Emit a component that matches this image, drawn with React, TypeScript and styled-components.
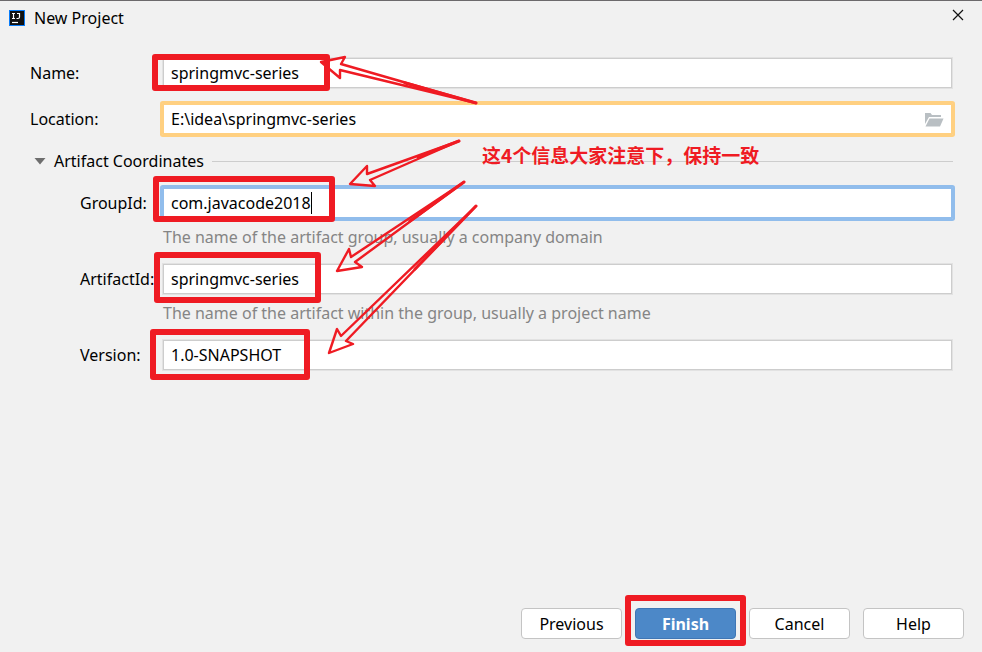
import React from "react";
import styled, { createGlobalStyle, css } from "styled-components";

const RED = "#ef1b23";

const GlobalStyle = createGlobalStyle`
  * { box-sizing: border-box; }
  body {
    margin: 0;
    background: #f1f1f1;
    color: #000;
    font-family: "Noto Sans", "Open Sans", "Noto Sans CJK SC", sans-serif;
    font-size: 16px;
    line-height: 22px;
  }
  button, input { font: inherit; color: inherit; }
`;

const Dialog = styled.main`
  position: relative;
  display: flex;
  flex-direction: column;
  min-height: 100vh;
  border-top: 1px solid #6c6a6c;
  background: #f1f1f1;
`;

const TitleBar = styled.header`
  display: flex;
  align-items: center;
  gap: 9px;
  height: 33px;
  padding: 0 16px 0 9px;
`;

const Title = styled.h1`
  flex: 1;
  margin: 0;
  font-size: 16px;
  font-weight: 400;
`;

const CloseButton = styled.button`
  display: flex;
  align-items: center;
  justify-content: center;
  width: 16px;
  height: 16px;
  margin-bottom: 6px;
  padding: 0;
  border: 0;
  background: none;
`;

const Form = styled.form`
  flex: 1;
  display: flex;
  flex-direction: column;
  padding: 16px 29px 13px 30px;
`;

const Row = styled.div`
  display: flex;
  align-items: center;
  height: 46px;
`;

const Label = styled.label<{ $nested?: boolean }>`
  flex: none;
  width: ${(p) => (p.$nested ? 82 : 132)}px;
  white-space: nowrap;
`;

const Field = styled.div`
  position: relative;
  flex: 1;
  display: flex;
`;

type Ring = "none" | "warning" | "focus";

const ring = (color: string) => css`
  border-color: ${color};
  border-radius: 1px;
  box-shadow: 0 0 0 2px ${color}, inset 0 0 0 1px ${color};
`;

const TextInput = styled.input<{ $ring: Ring }>`
  flex: 1;
  min-width: 0;
  height: 32px;
  padding: 0 8px;
  border: 1px solid #e2e2e2;
  outline: none;
  background: #fff;
  box-shadow: inset 0 0 0 1px #cdcdcd;
  ${(p) => p.$ring === "warning" && ring("#ffd081")}
  ${(p) => p.$ring === "focus" && ring("#91bdec")}
`;

const BrowseButton = styled.button`
  position: absolute;
  top: 8px;
  right: 9px;
  width: 20px;
  height: 16px;
  padding: 0;
  border: 0;
  background: none;
`;

const Caret = styled.span`
  position: absolute;
  top: 5px;
  left: 149px;
  width: 1px;
  height: 22px;
  background: #000;
`;

const SectionToggle = styled.button`
  display: flex;
  align-items: center;
  gap: 8px;
  height: 38px;
  padding: 0 0 0 4px;
  border: 0;
  background: none;
  text-align: left;
`;

const Divider = styled.span`
  flex: 1;
  height: 1px;
  background: #cdcdcd;
`;

const Section = styled.div`
  display: flex;
  flex-direction: column;
  gap: 8px;
  padding-left: 50px;
`;

const Hint = styled.p`
  margin: 0 0 0 83px;
  color: #858585;
`;

const Actions = styled.footer`
  display: flex;
  justify-content: flex-end;
  gap: 13px;
  margin-top: auto;
  margin-right: -11px;
`;

const ActionSlot = styled.div`
  position: relative;
  display: flex;
`;

const ActionButton = styled.button<{ $primary?: boolean }>`
  width: 101px;
  height: 31px;
  padding: 0;
  border: 1px solid ${(p) => (p.$primary ? "#3f76b5" : "#c4c4c4")};
  border-radius: 4px;
  background: ${(p) => (p.$primary ? "#4c88c8" : "#fff")};
  color: ${(p) => (p.$primary ? "#fff" : "#000")};
  font-weight: ${(p) => (p.$primary ? 700 : 400)};
  line-height: 28px;
`;

const Marker = styled.span<{ $left: number; $top: number; $width: number; $height: number }>`
  position: absolute;
  left: ${(p) => p.$left}px;
  top: ${(p) => p.$top}px;
  width: ${(p) => p.$width}px;
  height: ${(p) => p.$height}px;
  border: 6px solid ${RED};
  border-radius: 3px;
  pointer-events: none;
`;

const Arrows = styled.svg`
  position: absolute;
  top: -1px;
  left: 0;
  pointer-events: none;
`;

const Note = styled.p`
  position: absolute;
  top: 140px;
  left: 482px;
  margin: 0;
  color: ${RED};
  font-family: "Noto Sans CJK SC", sans-serif;
  font-size: 19px;
  font-weight: 700;
  line-height: 28px;
  white-space: nowrap;
`;

const AppIcon = () => (
  <svg width="16" height="16" viewBox="0 0 16 16" aria-hidden="true">
    <rect width="16" height="16" fill="#087cfa" />
    <rect x="1" y="1" width="14" height="14" fill="#111" />
    <path d="M3 3.500H6M4.500 3.500V8.500M3 8.500H6M8 3.500H10.500V7Q10.500 8.500 9 8.500H7.500" stroke="#fff" strokeWidth="1.200" fill="none" />
    <path d="M3 12.500H9" stroke="#fff" strokeWidth="1.200" />
  </svg>
);

const FolderIcon = () => (
  <svg width="20" height="16" viewBox="0 0 20 16" aria-hidden="true">
    <path d="M1 12V1H6.500L8 3H17V5H5Z" fill="#b9bfc3" />
    <path d="M5.500 6.500H19.500L16 14.500H1.500Z" fill="#b9bfc3" />
  </svg>
);

interface FieldRowProps {
  id: string;
  label: string;
  value: string;
  nested?: boolean;
  state?: Ring;
  children?: React.ReactNode;
}

function FieldRow({ id, label, value, nested, state = "none", children }: FieldRowProps) {
  return (
    <Row>
      <Label htmlFor={id} $nested={nested}>{label}</Label>
      <Field>
        <TextInput id={id} type="text" defaultValue={value} $ring={state} spellCheck={false} />
        {children}
      </Field>
    </Row>
  );
}

export default function App() {
  return (
    <>
      <GlobalStyle />
      <Dialog>
        <TitleBar>
          <AppIcon />
          <Title>New Project</Title>
          <CloseButton type="button" aria-label="Close">
            <svg width="12" height="12" viewBox="0 0 12 12">
              <path d="M1 1L11 11M11 1L1 11" stroke="#111" strokeWidth="1.200" />
            </svg>
          </CloseButton>
        </TitleBar>
        <Form onSubmit={(e) => e.preventDefault()}>
          <FieldRow id="name" label="Name:" value="springmvc-series">
            <Marker $left={-10} $top={-3} $width={178} $height={37} />
          </FieldRow>
          <FieldRow id="location" label="Location:" value="E:\idea\springmvc-series" state="warning">
            <BrowseButton type="button" aria-label="Browse"><FolderIcon /></BrowseButton>
          </FieldRow>
          <SectionToggle type="button" aria-expanded="true">
            <svg width="12" height="8" viewBox="0 0 12 8" aria-hidden="true">
              <path d="M0.500 1H11.500L6 7.500Z" fill="#6e6e6e" />
            </svg>
            Artifact Coordinates
            <Divider />
          </SectionToggle>
          <Section>
            <div>
              <FieldRow id="group" label="GroupId:" value="com.javacode2018" nested state="focus">
                <Caret />
                <Marker $left={-9} $top={-11} $width={182} $height={46} />
              </FieldRow>
              <Hint>The name of the artifact group, usually a company domain</Hint>
            </div>
            <div>
              <FieldRow id="artifact" label="ArtifactId:" value="springmvc-series" nested>
                <Marker $left={-8} $top={-11} $width={167} $height={51} />
              </FieldRow>
              <Hint>The name of the artifact within the group, usually a project name</Hint>
            </div>
            <FieldRow id="version" label="Version:" value="1.0-SNAPSHOT" nested>
              <Marker $left={-12} $top={-10} $width={160} $height={51} />
            </FieldRow>
          </Section>
          <Actions>
            <ActionButton type="button">Previous</ActionButton>
            <ActionSlot>
              <ActionButton type="submit" $primary>Finish</ActionButton>
              <Marker $left={-10} $top={-13} $width={121} $height={51} />
            </ActionSlot>
            <ActionButton type="button">Cancel</ActionButton>
            <ActionButton type="button">Help</ActionButton>
          </Actions>
        </Form>
        <Note>这4个信息大家注意下，保持一致</Note>
        <Arrows width="500" height="380" viewBox="0 0 500 380" fill="none" stroke={RED} strokeWidth="2.400" strokeLinejoin="round" aria-hidden="true">
          <path d="M476 103L341 64L345 57L321 62L340 78L340 70Z" />
          <path d="M459 141L367 174L367 166L350 184L375 186L370 180Z" />
          <path d="M464 182L351 257L349 249L337 271L362 267L355 262Z" />
          <path d="M476 206L341 336L337 329L329 353L353 344L346 341Z" />
          <path d="M476 103L405 83M459 141L418 157M464 182L410 221M476 206L415 269" strokeLinecap="round" strokeWidth="3" />
        </Arrows>
      </Dialog>
    </>
  );
}
